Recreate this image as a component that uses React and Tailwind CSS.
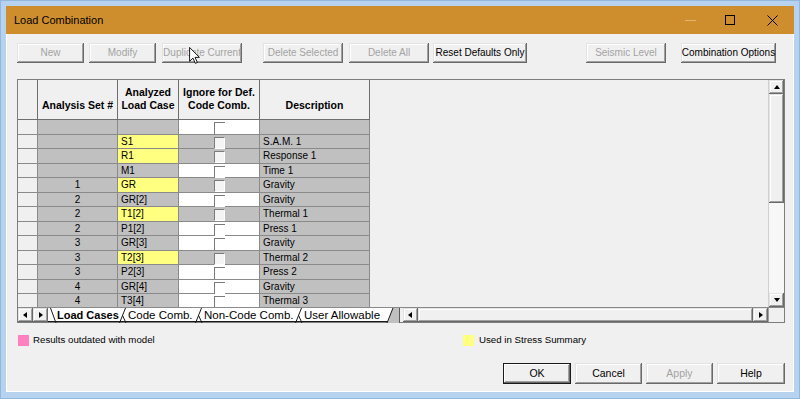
import React from "react";

const rows = [
  { set: "", lc: "", y: false, w: true, d: "" },
  { set: "", lc: "S1", y: true, w: false, d: "S.A.M. 1" },
  { set: "", lc: "R1", y: true, w: false, d: "Response 1" },
  { set: "", lc: "M1", y: false, w: true, d: "Time 1" },
  { set: "1", lc: "GR", y: true, w: false, d: "Gravity" },
  { set: "2", lc: "GR[2]", y: false, w: true, d: "Gravity" },
  { set: "2", lc: "T1[2]", y: true, w: false, d: "Thermal 1" },
  { set: "2", lc: "P1[2]", y: false, w: true, d: "Press 1" },
  { set: "3", lc: "GR[3]", y: false, w: true, d: "Gravity" },
  { set: "3", lc: "T2[3]", y: true, w: false, d: "Thermal 2" },
  { set: "3", lc: "P2[3]", y: false, w: true, d: "Press 2" },
  { set: "4", lc: "GR[4]", y: false, w: true, d: "Gravity" },
  { set: "4", lc: "T3[4]", y: false, w: true, d: "Thermal 3" },
];

const bevel =
  "shadow-[inset_-1px_-1px_0_#696969,inset_1px_1px_0_#e3e3e3,inset_-2px_-2px_0_#a0a0a0,inset_2px_2px_0_#ffffff]";

function Btn({ cls, disabled, children }) {
  return (
    <div
      className={`${cls} h-[20px] shrink-0 flex items-center justify-center bg-[#f0f0f0] ${bevel} text-[10px] leading-none ${
        disabled ? "text-[#a3a3a3]" : "text-black"
      }`}
    >
      {children}
    </div>
  );
}

function BottomBtn({ cls, disabled, def, children }) {
  return (
    <div
      className={`${cls} h-[21px] shrink-0 flex items-center justify-center bg-[#f0f0f0] text-[10.5px] leading-none ${
        def
          ? "border border-[#1a1a1a] shadow-[inset_-1px_-1px_0_#696969,inset_1px_1px_0_#ffffff,inset_-2px_-2px_0_#a0a0a0]"
          : bevel
      } ${disabled ? "text-[#a3a3a3]" : "text-black"}`}
    >
      {children}
    </div>
  );
}

function ArrowBtn({ dir, cls }) {
  const paths = {
    up: "M1 5 L4 1 L7 5 Z",
    down: "M1 1 L4 5 L7 1 Z",
    left: "M5 1 L1 4 L5 7 Z",
    right: "M2 1 L6 4 L2 7 Z",
  };
  const vb = dir === "up" || dir === "down" ? "0 0 8 6" : "0 0 7 8";
  const sz = dir === "up" || dir === "down" ? { w: 8, h: 6 } : { w: 7, h: 8 };
  return (
    <div className={`${cls} shrink-0 flex items-center justify-center bg-[#f0f0f0] ${bevel}`}>
      <svg width={sz.w} height={sz.h} viewBox={vb}>
        <path d={paths[dir]} fill="#000" />
      </svg>
    </div>
  );
}

function CheckBox({ white }) {
  return (
    <div
      className={`w-[11px] h-[12px] mt-[2px] border-t border-l border-[#7b7b7b] ${
        white ? "bg-white" : "bg-[#f4f4f4] border-r border-b border-r-white border-b-white"
      }`}
    />
  );
}

function Join() {
  return (
    <svg width="9" height="15" viewBox="0 0 9 15" className="shrink-0">
      <path d="M0.5 15 L6.5 0" stroke="#1a1a1a" strokeWidth="1" fill="none" />
      <path d="M3.6 7.5 L7 15" stroke="#1a1a1a" strokeWidth="1" fill="none" />
    </svg>
  );
}

export default function App() {
  return (
    <div className="relative w-[800px] h-[399px] bg-[#b7d2ee] border border-[#93b8de] pt-[5px] px-[5px] pb-[6px] flex flex-col font-['Liberation_Sans',Arial,sans-serif] overflow-hidden">
      {/* title bar */}
      <div className="h-[28px] shrink-0 bg-[#ce8e2d] flex items-center">
        <span className="pl-[8px] text-[11px] text-black">Load Combination</span>
        <div className="ml-auto flex items-center h-full">
          <div className="w-[40px] h-full flex items-center justify-center">
            <div className="w-[11px] h-[1px] bg-[#e2b574]" />
          </div>
          <div className="w-[40px] h-full flex items-center justify-center">
            <div className="w-[10px] h-[10px] border border-black" />
          </div>
          <div className="w-[44px] h-full flex items-center justify-center">
            <svg width="11" height="11" viewBox="0 0 11 11">
              <path d="M0.5 0.5 L10.5 10.5 M10.5 0.5 L0.5 10.5" stroke="#000" strokeWidth="1" />
            </svg>
          </div>
        </div>
      </div>

      {/* content */}
      <div className="flex-1 bg-[#f0f0f0] border-l border-r border-b border-white flex flex-col">
        {/* toolbar */}
        <div className="mt-[9px] flex">
          <Btn cls="ml-[10px] w-[67px]" disabled>New</Btn>
          <Btn cls="ml-[5px] w-[67px]" disabled>Modify</Btn>
          <Btn cls="ml-[6px] w-[80px]" disabled>Duplicate Current</Btn>
          <Btn cls="ml-[21px] w-[80px]" disabled>Delete Selected</Btn>
          <Btn cls="ml-[6px] w-[80px]" disabled>Delete All</Btn>
          <Btn cls="ml-[4px] w-[94px]">Reset Defaults Only</Btn>
          <Btn cls="ml-[59px] w-[80px]" disabled>Seismic Level</Btn>
          <Btn cls="ml-[15px] w-[95px]">Combination Options</Btn>
        </div>

        {/* grid */}
        <div className="mt-[16px] ml-[10px] w-[768px] h-[244px] border border-[#7d7d7d] flex flex-col">
          <div className="h-[227px] flex">
            {/* table area */}
            <div className="w-[750px] h-full overflow-hidden bg-[#f0f0f0]">
              <div className="flex h-[40px] text-[10.5px] font-bold leading-[13px] text-black">
                <div className="w-[20px] border-r border-b border-[#6e6e6e]" />
                <div className="w-[80px] border-r border-b border-[#6e6e6e] flex items-end justify-center pb-[7px] text-center">
                  Analysis Set #
                </div>
                <div className="w-[61px] border-r border-b border-[#6e6e6e] flex items-end justify-center pb-[7px] text-center">
                  Analyzed
                  <br />
                  Load Case
                </div>
                <div className="w-[81px] border-r border-b border-[#6e6e6e] flex items-end justify-center pb-[7px] text-center">
                  Ignore for Def.
                  <br />
                  Code Comb.
                </div>
                <div className="w-[110px] border-r border-b border-[#6e6e6e] flex items-end justify-center pb-[7px] text-center">
                  Description
                </div>
              </div>
              {rows.map((r, i) => (
                <div key={i} className="flex h-[14.5px] text-[10px] leading-[13px] text-black">
                  <div className="w-[20px] border-r border-b border-[#8a8a8a] bg-[#f0f0f0]" />
                  <div className="w-[80px] border-r border-b border-[#8a8a8a] bg-[#c0c0c0] text-center">
                    {r.set}
                  </div>
                  <div
                    className={`w-[61px] border-r border-b border-[#8a8a8a] pl-[3px] ${
                      r.y ? "bg-[#ffff80]" : "bg-[#c0c0c0]"
                    }`}
                  >
                    {r.lc}
                  </div>
                  <div
                    className={`w-[81px] border-r border-b border-[#8a8a8a] flex justify-center ${
                      r.w ? "bg-white" : "bg-[#c0c0c0]"
                    }`}
                  >
                    <CheckBox white={r.w} />
                  </div>
                  <div className="w-[110px] border-r border-b border-[#8a8a8a] bg-[#c0c0c0] pl-[3px]">
                    {r.d}
                  </div>
                </div>
              ))}
            </div>
            {/* vertical scrollbar */}
            <div className="w-[16px] h-full flex flex-col bg-[#f7f7f7] border-l border-[#d0d0d0]">
              <ArrowBtn dir="up" cls="w-full h-[14px]" />
              <div className={`w-full h-[109px] bg-[#f0f0f0] ${bevel}`} />
              <div className="flex-1" />
              <ArrowBtn dir="down" cls="w-full h-[14px]" />
            </div>
          </div>
          {/* bottom bar: tabs + hscroll */}
          <div className="h-[15px] flex border-t border-[#8a8a8a] bg-white">
            <ArrowBtn dir="left" cls="w-[15px] h-full" />
            <ArrowBtn dir="right" cls="w-[15px] h-full" />
            <div className="w-[352px] h-full flex border-b border-[#1a1a1a] text-black">
              <svg width="9" height="15" viewBox="0 0 9 15" className="shrink-0">
                <path d="M2.5 0 L8 15" stroke="#1a1a1a" strokeWidth="1" fill="none" />
              </svg>
              <span className="w-[62px] shrink-0 text-[11px] font-bold leading-[14px]">Load Cases</span>
              <Join />
              <span className="w-[67px] shrink-0 text-[11.5px] leading-[14px]">Code Comb.</span>
              <Join />
              <span className="w-[91px] shrink-0 text-[11.5px] leading-[14px]">Non-Code Comb.</span>
              <Join />
              <span className="w-[80px] shrink-0 text-[11.5px] leading-[14px] whitespace-nowrap overflow-hidden">
                User Allowable
              </span>
              <svg width="16" height="15" viewBox="0 0 16 15" className="shrink-0">
                <path d="M3 15 L9 0 L16 0 L16 15 Z" fill="#c0c0c0" />
                <path d="M3 15 L9 0" stroke="#1a1a1a" strokeWidth="1" fill="none" />
                <path d="M15.5 0 L15.5 15" stroke="#5a5a5a" strokeWidth="1" />
              </svg>
            </div>
            <div className="w-[3px] bg-[#f0f0f0]" />
            <div className="flex-1 h-full flex bg-[#f0f0f0]">
              <ArrowBtn dir="left" cls="w-[15px] h-full" />
              <div className={`flex-1 h-full bg-[#f0f0f0] ${bevel}`} />
              <ArrowBtn dir="right" cls="w-[15px] h-full" />
            </div>
            <div className="w-[16px] h-full bg-[#f0f0f0] border-l border-[#a0a0a0]" />
          </div>
        </div>

        {/* legend */}
        <div className="mt-[11px] flex items-center h-[12px] text-[9.7px] text-black">
          <div className="ml-[11px] w-[445px] flex items-center">
            <div className="w-[11px] h-[11px] bg-[#ff80c0]" />
            <span className="ml-[4px]">Results outdated with model</span>
          </div>
          <div className="flex items-center">
            <div className="w-[11px] h-[11px] bg-[#ffff80]" />
            <span className="ml-[5px]">Used in Stress Summary</span>
          </div>
        </div>

        {/* bottom buttons */}
        <div className="mt-[17px] flex justify-end pr-[8px] gap-[4px]">
          <BottomBtn cls="w-[68px]" def>OK</BottomBtn>
          <BottomBtn cls="w-[67px]">Cancel</BottomBtn>
          <BottomBtn cls="w-[67px]" disabled>Apply</BottomBtn>
          <BottomBtn cls="w-[68px]">Help</BottomBtn>
        </div>
      </div>

      {/* mouse pointer */}
      <svg
        className="absolute left-[188px] top-[46px]"
        width="11"
        height="17"
        viewBox="0 0 12 19"
      >
        <path
          d="M0.5 0.5 L0.5 16 L4.3 12.4 L7 18.3 L9.2 17.3 L6.6 11.6 L11.5 11.6 Z"
          fill="#ffffff"
          stroke="#000000"
          strokeWidth="1"
        />
      </svg>
    </div>
  );
}
